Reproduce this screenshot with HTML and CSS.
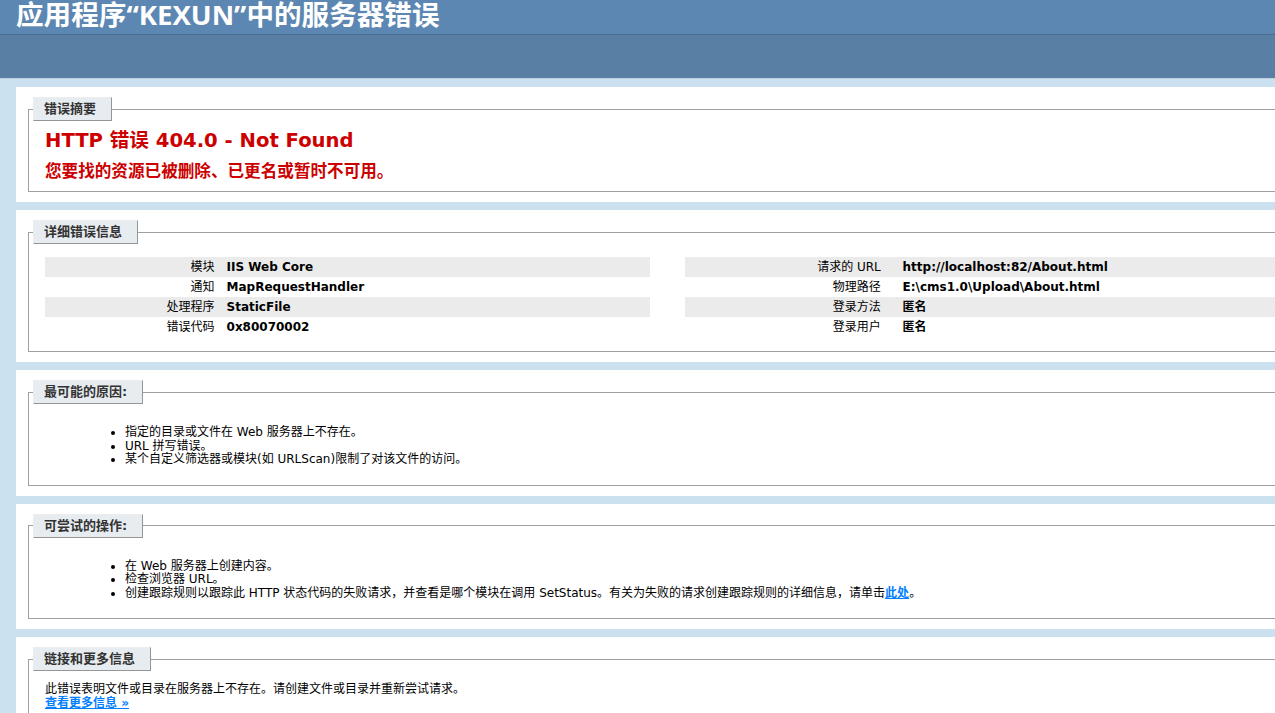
FILE: index.html
```html
<!DOCTYPE html>
<html lang="zh-CN">
<head>
    <meta charset="UTF-8">
    <title>IIS 7.5 详细错误 - 404.0 - Not Found</title>
    <link rel="stylesheet" href="styles.css">
</head>
<body>
    <div class="page">
        <div id="header"><h1>应用程序“KEXUN”中的服务器错误</h1></div>
        <div id="server_version"></div>

        <div id="content">
            <div class="content-container">
                <fieldset>
                    <legend>错误摘要</legend>
                    <h2>HTTP 错误 404.0 - Not Found</h2>
                    <h3>您要找的资源已被删除、已更名或暂时不可用。</h3>
                </fieldset>
            </div>

            <div class="content-container">
                <fieldset>
                    <legend>详细错误信息</legend>
                    <div class="details">
                        <div id="details-left">
                            <table>
                                <tr class="alt"><th>模块</th><td>IIS Web Core</td></tr>
                                <tr><th>通知</th><td>MapRequestHandler</td></tr>
                                <tr class="alt"><th>处理程序</th><td>StaticFile</td></tr>
                                <tr><th>错误代码</th><td>0x80070002</td></tr>
                            </table>
                        </div>
                        <div id="details-right">
                            <table>
                                <tr class="alt"><th>请求的 URL</th><td>http://localhost:82/About.html</td></tr>
                                <tr><th>物理路径</th><td>E:\cms1.0\Upload\About.html</td></tr>
                                <tr class="alt"><th>登录方法</th><td>匿名</td></tr>
                                <tr><th>登录用户</th><td>匿名</td></tr>
                            </table>
                        </div>
                    </div>
                </fieldset>
            </div>

            <div class="content-container">
                <fieldset>
                    <legend>最可能的原因:</legend>
                    <ul>
                        <li>指定的目录或文件在 Web 服务器上不存在。</li>
                        <li>URL 拼写错误。</li>
                        <li>某个自定义筛选器或模块(如 URLScan)限制了对该文件的访问。</li>
                    </ul>
                </fieldset>
            </div>

            <div class="content-container">
                <fieldset>
                    <legend>可尝试的操作:</legend>
                    <ul>
                        <li>在 Web 服务器上创建内容。</li>
                        <li>检查浏览器 URL。</li>
                        <li>创建跟踪规则以跟踪此 HTTP 状态代码的失败请求，并查看是哪个模块在调用 SetStatus。有关为失败的请求创建跟踪规则的详细信息，请单击<a href="#">此处</a>。</li>
                    </ul>
                </fieldset>
            </div>

            <div class="content-container">
                <fieldset>
                    <legend>链接和更多信息</legend>
                    <p class="more-text">此错误表明文件或目录在服务器上不存在。请创建文件或目录并重新尝试请求。</p>
                    <p><a href="#">查看更多信息 &raquo;</a></p>
                </fieldset>
            </div>
        </div>
    </div>
</body>
</html>
```

FILE: styles.css
```css
html, body {
    overflow: hidden;
}

body {
    margin: 0;
    font-size: 12px;
    line-height: 13.5px;
    font-family: "DejaVu Sans", "Noto Sans CJK SC", sans-serif;
    background: #CBE1EF;
}

.page {
    width: 1830px;
}

#header {
    padding: 0 16px 6px 16px;
    color: #FFF;
    background-color: #5C87B2;
}

h1 {
    margin: 0;
    font-size: 27.6px;
    line-height: 28px;
    font-family: "Open Sans", "Noto Sans CJK SC", sans-serif;
    color: #FFF;
}

#server_version {
    height: 43px;
    background-color: #5A7FA5;
    border-top: 1px solid #4A6C8E;
    border-bottom: 1px solid #C1CFDD;
}

#content {
    margin-left: 16px;
}

.content-container {
    background: #FFF;
    width: 1767px;
    margin-top: 8px;
    padding: 10px;
}

fieldset {
    margin: 0 2px;
    padding: 0 16px 10px 16px;
    border: 1px solid #A0A0A0;
}

legend {
    color: #333333;
    padding: 4px 15px 4px 10px;
    margin: 0 0 8px -12px;
    border-top: 1px solid #EDEDED;
    border-left: 1px solid #EDEDED;
    border-right: 1px solid #969696;
    border-bottom: 1px solid #969696;
    background: #E7ECF0;
    font-weight: bold;
    font-size: 13px;
    line-height: 14px;
}

h2 {
    margin: 0;
    font-size: 19.6px;
    line-height: 23px;
    color: #CC0000;
}

h3 {
    margin: 10px 0 0 0;
    font-size: 16.6px;
    line-height: 19px;
    color: #CC0000;
}

.details {
    display: flex;
    margin-top: 1px;
}

#details-left {
    width: 35%;
    margin-right: 2%;
}

#details-right {
    width: 63%;
}

table {
    margin: 4px 0;
    width: 100%;
    border-spacing: 0;
}

td, th {
    vertical-align: top;
    padding: 3px 0;
    line-height: 14px;
    text-align: left;
    font-weight: bold;
}

th {
    width: 30%;
    padding-right: 2%;
    text-align: right;
    font-weight: normal;
}

#details-right th {
    width: 20%;
}

tr.alt td, tr.alt th {
    background-color: #EBEBEB;
}

ul {
    margin: 14px 0 8px 40px;
    padding-left: 40px;
}

a:link, a:visited {
    color: #007EFF;
    font-weight: bold;
}

p {
    margin: 0;
}

.more-text {
    margin-top: 4px;
}
```
